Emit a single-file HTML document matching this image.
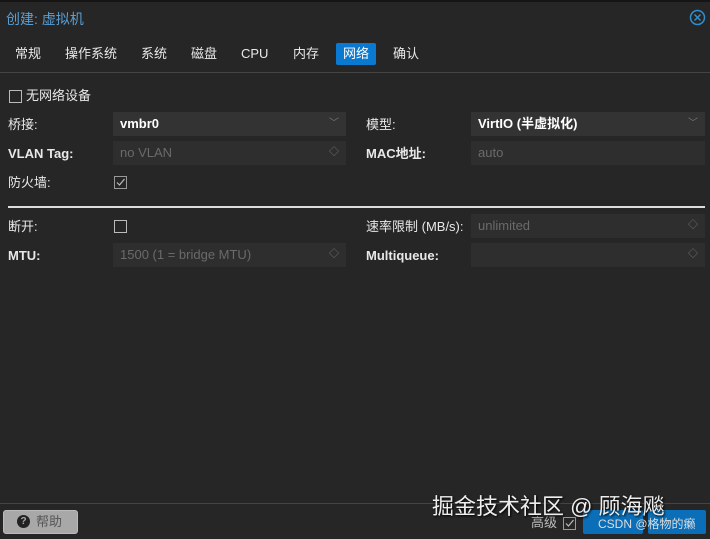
<!DOCTYPE html>
<html><head><meta charset="utf-8"><style>
body{margin:0;width:710px;height:539px;background:#262626;font-family:"Liberation Sans","Noto Sans CJK SC",sans-serif;font-size:13px;color:#e8e8e8;position:relative;overflow:hidden}
.a{position:absolute;white-space:nowrap;line-height:16px}
.lbl{position:absolute;font-size:13px;color:#e8e8e8;white-space:nowrap;line-height:16px}
.inp{position:absolute;height:24px;background:#333;box-sizing:border-box;padding-left:7px;line-height:24px;font-size:13px;white-space:nowrap}
.dis{color:#6a6a6a;background:#2e2e2e}
.cb{position:absolute;width:11px;height:11px;border:1px solid #bbb}
.arr{position:absolute;right:7px;top:0;color:#777;font-size:10px;line-height:24px}
</style></head><body>
<div class="a" style="left:0;top:0;width:710px;height:2px;background:#151515"></div>
<div class="a" style="left:6px;top:11px;font-size:14px;color:#5a9fd4">创建: 虚拟机</div>
<svg class="a" style="left:689px;top:9px" width="17" height="17"><circle cx="8.5" cy="8.5" r="7" fill="none" stroke="#2f8fcf" stroke-width="1.5"/><path d="M5.5 5.5L11.5 11.5M11.5 5.5L5.5 11.5" stroke="#2f8fcf" stroke-width="1.5"/></svg>
<span class="a" style="left:15px;top:46px">常规</span><span class="a" style="left:65px;top:46px">操作系统</span><span class="a" style="left:141px;top:46px">系统</span><span class="a" style="left:191px;top:46px">磁盘</span><span class="a" style="left:241px;top:46px">CPU</span><span class="a" style="left:293px;top:46px">内存</span><span class="a" style="left:393px;top:46px">确认</span>
<div class="a" style="left:336px;top:43px;width:40px;height:22px;background:#0a7ad0;border-radius:2px;color:#fff;text-align:center;line-height:22px">网络</div>
<div class="a" style="left:0;top:72px;width:710px;height:1px;background:#444"></div>
<div class="cb" style="left:9px;top:90px"></div><div class="lbl" style="left:26px;top:88px">无网络设备</div>
<div class="lbl" style="left:8px;top:117px">桥接:</div>
<div class="inp" style="left:113px;top:112px;width:233px;font-weight:bold;color:#fff">vmbr0<span class="arr" style="font-weight:normal">﹀</span></div>
<div class="lbl" style="left:8px;top:146px;font-weight:bold">VLAN Tag:</div>
<div class="inp dis" style="left:113px;top:141px;width:233px">no VLAN<span class="arr">◇</span></div>
<div class="lbl" style="left:8px;top:175px">防火墙:</div>
<div class="cb" style="left:114px;top:176px;border-color:#999"></div>
<svg class="a" style="left:114px;top:176px" width="13" height="13"><path d="M3 6.5L5.5 9L10.5 3" fill="none" stroke="#bbb" stroke-width="1.2"/></svg>
<div class="lbl" style="left:366px;top:117px">模型:</div>
<div class="inp" style="left:471px;top:112px;width:234px;font-weight:bold;color:#fff">VirtIO (半虚拟化)<span class="arr" style="font-weight:normal">﹀</span></div>
<div class="lbl" style="left:366px;top:146px;font-weight:bold">MAC地址:</div>
<div class="inp dis" style="left:471px;top:141px;width:234px">auto</div>
<div class="a" style="left:8px;top:206px;width:697px;height:2px;background:#ddd"></div>
<div class="lbl" style="left:8px;top:219px">断开:</div>
<div class="cb" style="left:114px;top:220px"></div>
<div class="lbl" style="left:8px;top:248px;font-weight:bold">MTU:</div>
<div class="inp dis" style="left:113px;top:243px;width:233px">1500 (1 = bridge MTU)<span class="arr">◇</span></div>
<div class="lbl" style="left:366px;top:219px">速率限制 (MB/s):</div>
<div class="inp dis" style="left:471px;top:214px;width:234px">unlimited<span class="arr">◇</span></div>
<div class="lbl" style="left:366px;top:248px;font-weight:bold">Multiqueue:</div>
<div class="inp dis" style="left:471px;top:243px;width:234px"><span class="arr">◇</span></div>
<div class="a" style="left:0;top:503px;width:710px;height:1px;background:#444"></div>
<div class="a" style="left:3px;top:510px;width:75px;height:24px;background:#a8a8a8;border-radius:3px;box-sizing:border-box;border:1px solid #bbb"></div>
<div class="a" style="left:17px;top:515px;width:13px;height:13px;border-radius:50%;background:#222;color:#aaa;font-size:10px;font-weight:bold;text-align:center;line-height:13px">?</div>
<div class="a" style="left:36px;top:514px;color:#555">帮助</div>
<div class="a" style="left:583px;top:510px;width:60px;height:24px;background:#0a6fb8;border-radius:2px"></div>
<div class="a" style="left:648px;top:510px;width:58px;height:24px;background:#0a6fb8;border-radius:2px"></div>
<div class="a" style="left:531px;top:515px;color:#bbb">高级</div>
<div class="cb" style="left:563px;top:517px;border-color:#999"></div>
<svg class="a" style="left:563px;top:517px" width="13" height="13"><path d="M3 6.5L5.5 9L10.5 3" fill="none" stroke="#bbb" stroke-width="1.2"/></svg>
<div class="a" style="left:598px;top:516px;color:#ddd;font-size:12px">CSDN @格物的癞</div>
<div class="a" style="left:432px;top:494px;font-size:22px;line-height:26px;color:#eee;text-shadow:1px 1px 2px #000">掘金技术社区 @ 顾海飚</div>
</body></html>
